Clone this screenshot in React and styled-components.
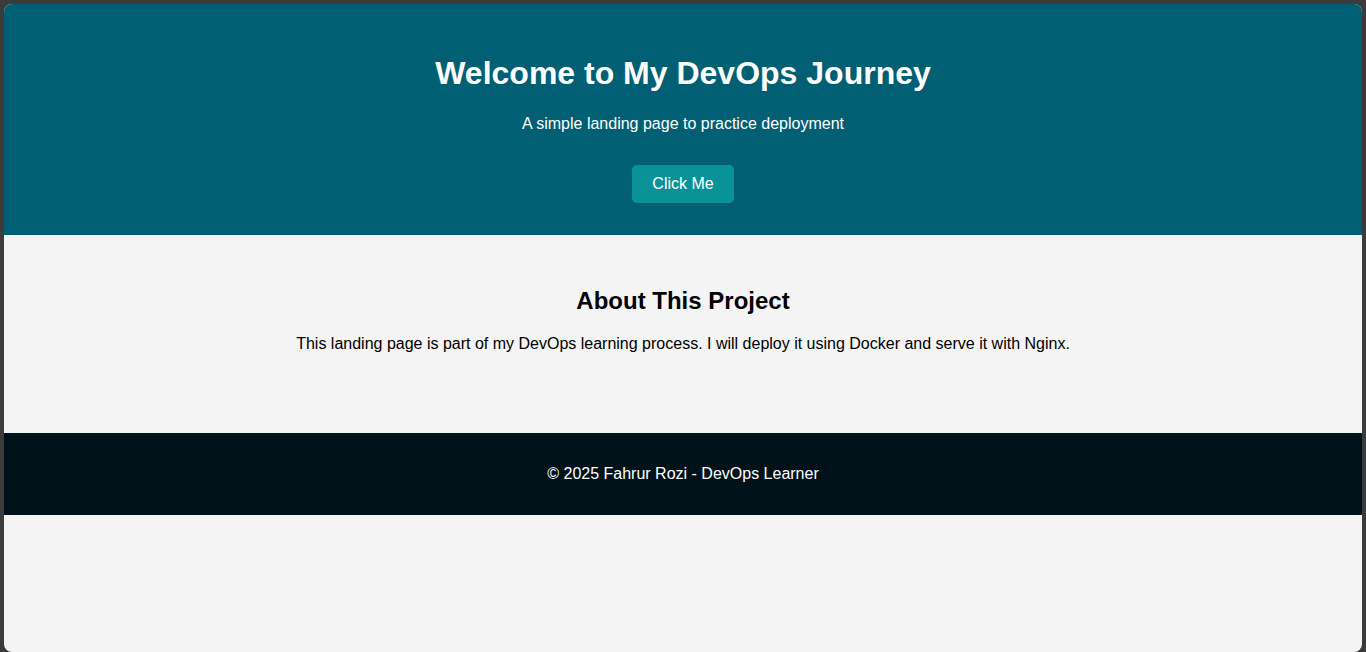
import React from "react";
import styled, { createGlobalStyle } from "styled-components";

const Global = createGlobalStyle`
  html, body { margin: 0; padding: 0; background: #3b3b3b; }
  body { font-family: "Liberation Sans", Arial, sans-serif; }
  * { box-sizing: border-box; }
`;

const Frame = styled.div`
  height: 652px;
  padding: 4px 4px 0 4px;
  background: #3b3b3b;
`;

const Page = styled.div`
  height: 648px;
  background: #f4f4f4;
  border-radius: 8px;
  overflow: hidden;
  display: flex;
  flex-direction: column;
`;

const Hero = styled.header`
  background: #005f73;
  color: #fff;
  text-align: center;
  height: 231px;
  padding-top: 51px;
  display: flex;
  flex-direction: column;
  align-items: center;
`;

const Title = styled.h1`
  margin: 0;
  font-size: 32px;
  line-height: 37px;
  font-weight: 700;
`;

const Subtitle = styled.p`
  margin: 23px 0 0;
  font-size: 16px;
  line-height: 18px;
`;

const Button = styled.button`
  margin-top: 32px;
  height: 38px;
  padding: 0 20px;
  border: none;
  border-radius: 5px;
  background: #0a9396;
  color: #fff;
  font-family: inherit;
  font-size: 16px;
  cursor: pointer;
`;

const About = styled.section`
  height: 198px;
  padding-top: 52px;
  text-align: center;
  color: #000;
`;

const Heading = styled.h2`
  margin: 0;
  font-size: 24px;
  line-height: 28px;
  font-weight: 700;
`;

const Text = styled.p`
  margin: 20px 0 0;
  font-size: 16px;
  line-height: 18px;
`;

const Footer = styled.footer`
  background: #001219;
  color: #fff;
  height: 82px;
  display: flex;
  align-items: center;
  justify-content: center;
  font-size: 16px;
  line-height: 18px;
`;

export default function App() {
  return (
    <>
      <Global />
      <Frame>
        <Page>
          <Hero>
            <Title>Welcome to My DevOps Journey</Title>
            <Subtitle>A simple landing page to practice deployment</Subtitle>
            <Button>Click Me</Button>
          </Hero>
          <About>
            <Heading>About This Project</Heading>
            <Text>
              This landing page is part of my DevOps learning process. I will deploy it using Docker and serve it with Nginx.
            </Text>
          </About>
          <Footer>© 2025 Fahrur Rozi - DevOps Learner</Footer>
        </Page>
      </Frame>
    </>
  );
}
